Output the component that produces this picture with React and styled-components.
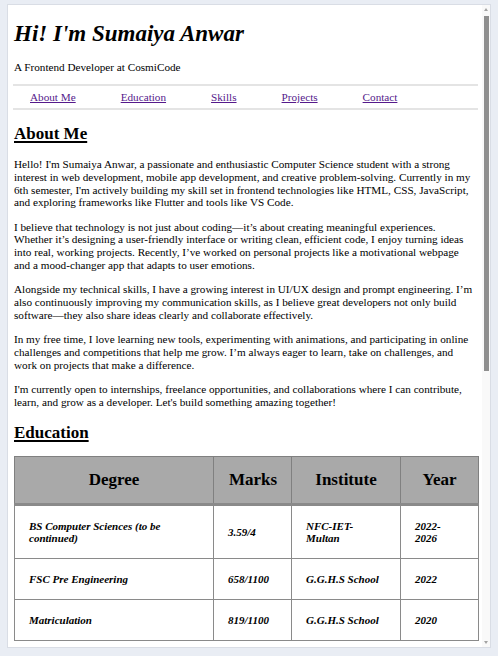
import React from 'react';
import styled, { createGlobalStyle } from 'styled-components';

const GlobalStyle = createGlobalStyle`
	html, body {
		margin: 0;
		padding: 0;
		background: #e9edf4;
		font-family: "Liberation Serif", "Times New Roman", serif;
		color: #000;
	}
`;

const Frame = styled.div`
	position: relative;
	box-sizing: border-box;
	margin: 4px 0 0 7px;
	width: 484px;
	height: 644px;
	background: #fff;
	border: 1px solid #d9dde5;
	overflow: hidden;
`;

const ScrollTrack = styled.div`
	position: absolute;
	top: 0;
	right: 0;
	bottom: 0;
	width: 8px;
	background: #f9f9f9;
	display: flex;
	flex-direction: column;
	align-items: center;
`;

const Arrow = styled.div`
	width: 0;
	height: 0;
	margin: 3px 0;
	border-left: 2.5px solid transparent;
	border-right: 2.5px solid transparent;
	${p => p.down
		? 'border-top: 3px solid #a3a3a3; margin-top: auto;'
		: 'border-bottom: 3px solid #a3a3a3;'}
`;

const Thumb = styled.div`
	width: 5px;
	height: 355px;
	margin-top: 2px;
	background: #8f8f8f;
`;

const Page = styled.div`
	padding: 0 12px 0 6px;
	font-size: 11.2px;
`;

const Name = styled.h1`
	margin: 16px 0 14px;
	font-size: 23px;
	font-style: italic;
	font-weight: bold;
`;

const Tagline = styled.p`
	margin: 0 0 11px;
`;

const Nav = styled.nav`
	display: flex;
	gap: 45px;
	padding: 5px 0 5px 17px;
	border-top: 2px solid #e4e4e4;
	border-bottom: 2px solid #e4e4e4;
	margin-left: -1px;
`;

const NavLink = styled.a`
	color: #551a8b;
	text-decoration: underline;
`;

const Heading = styled.h2`
	margin: 14px 0;
	font-size: 17px;
	font-weight: bold;
	text-decoration: underline;
	text-decoration-thickness: 2px;
	text-underline-offset: 2px;
`;

const Para = styled.p`
	margin: 0 3px 11.5px 0;
	line-height: 12.8px;
`;

const Table = styled.table`
	border-collapse: collapse;
	width: 464px;
	table-layout: fixed;
	border: 1px solid #6f6f6f;
	margin-top: -1px;
`;

const Th = styled.th`
	box-sizing: border-box;
	background: #a9a9a9;
	font-size: 17px;
	font-weight: bold;
	text-align: center;
	padding: 13px 15px;
	border: 1px solid #808080;
	border-bottom: 3px solid #8a8a8a;
	width: ${p => p.w}px;
`;

const Td = styled.td`
	font-size: 11px;
	line-height: 12px;
	font-weight: bold;
	font-style: italic;
	text-align: left;
	padding: 14px 16px 14px 14px;
	border: 1px solid #8a8a8a;
	vertical-align: middle;
`;

const education = [
	['BS Computer Sciences (to be continued)', '3.59/4', 'NFC-IET-Multan', '2022-2026'],
	['FSC Pre Engineering', '658/1100', 'G.G.H.S School', '2022'],
	['Matriculation', '819/1100', 'G.G.H.S School', '2020'],
];

export default function App() {
	return (
		<>
			<GlobalStyle />
			<Frame>
				<Page>
					<header>
						<Name>Hi! I'm Sumaiya Anwar</Name>
						<Tagline>A Frontend Developer at CosmiCode</Tagline>
					</header>
					<Nav>
						<NavLink href="#about">About Me</NavLink>
						<NavLink href="#education">Education</NavLink>
						<NavLink href="#skills">Skills</NavLink>
						<NavLink href="#projects">Projects</NavLink>
						<NavLink href="#contact">Contact</NavLink>
					</Nav>

					<section id="about">
						<Heading>About Me</Heading>
						<Para>
							Hello! I'm Sumaiya Anwar, a passionate and enthusiastic Computer Science student with a strong interest in web development, mobile app development, and creative problem-solving. Currently in my 6th semester, I'm actively building my skill set in frontend technologies like HTML, CSS, JavaScript, and exploring frameworks like Flutter and tools like VS Code.
						</Para>
						<Para>
							I believe that technology is not just about coding—it’s about creating meaningful experiences. Whether it’s designing a user-friendly interface or writing clean, efficient code, I enjoy turning ideas into real, working projects. Recently, I’ve worked on personal projects like a motivational webpage and a mood-changer app that adapts to user emotions.
						</Para>
						<Para>
							Alongside my technical skills, I have a growing interest in UI/UX design and prompt engineering. I’m also continuously improving my communication skills, as I believe great developers not only build software—they also share ideas clearly and collaborate effectively.
						</Para>
						<Para>
							In my free time, I love learning new tools, experimenting with animations, and participating in online challenges and competitions that help me grow. I’m always eager to learn, take on challenges, and work on projects that make a difference.
						</Para>
						<Para>
							I'm currently open to internships, freelance opportunities, and collaborations where I can contribute, learn, and grow as a developer. Let's build something amazing together!
						</Para>
					</section>

					<section id="education">
						<Heading>Education</Heading>
						<Table>
							<thead>
								<tr>
									<Th w={199}>Degree</Th>
									<Th w={78}>Marks</Th>
									<Th w={109}>Institute</Th>
									<Th w={78}>Year</Th>
								</tr>
							</thead>
							<tbody>
								{education.map(row => (
									<tr key={row[0]}>
										{row.map(cell => <Td key={cell}>{cell}</Td>)}
									</tr>
								))}
							</tbody>
						</Table>
					</section>
				</Page>
				<ScrollTrack>
					<Arrow />
					<Thumb />
					<Arrow down />
				</ScrollTrack>
			</Frame>
		</>
	);
}
